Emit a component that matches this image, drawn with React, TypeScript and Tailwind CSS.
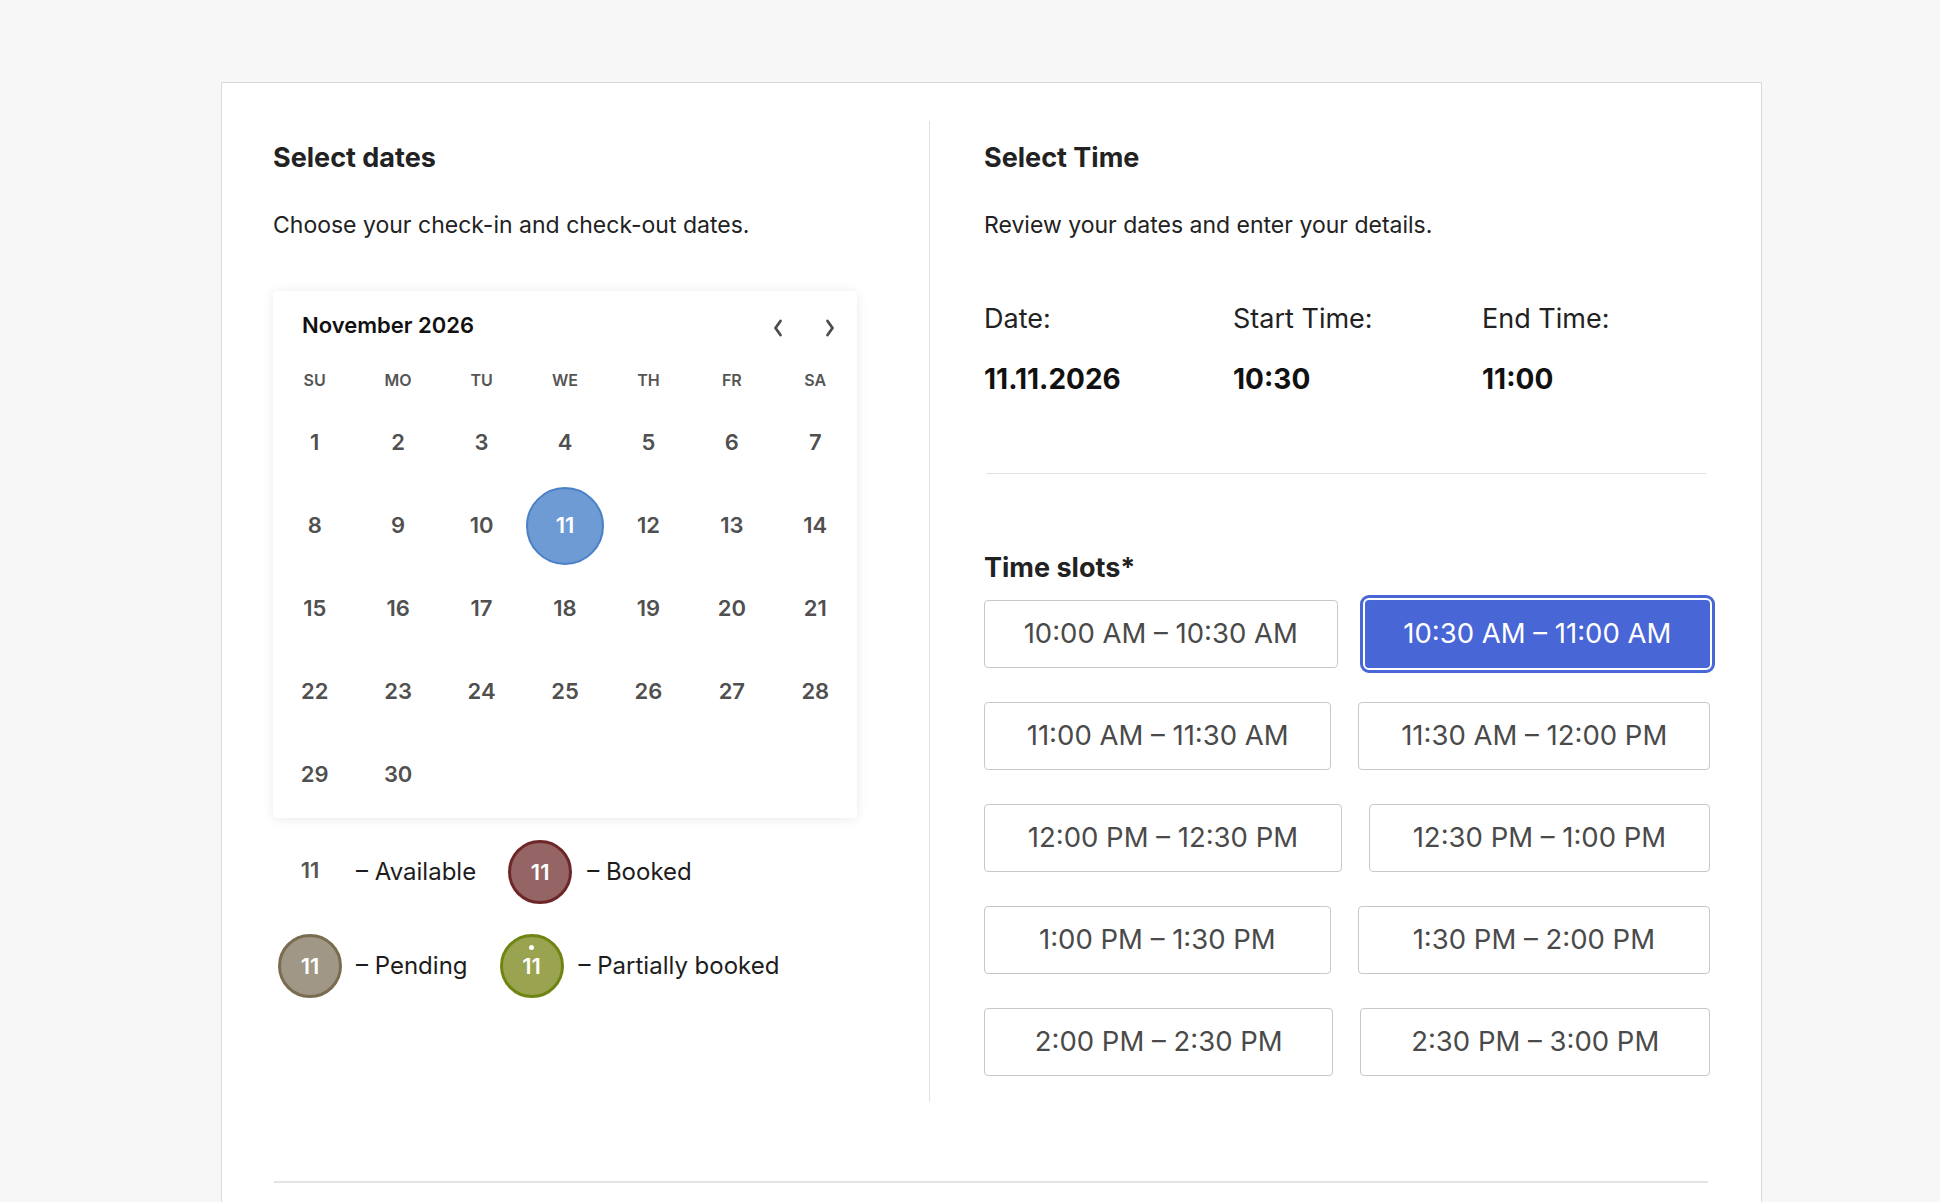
import React from "react";

const weekdays = ["SU", "MO", "TU", "WE", "TH", "FR", "SA"];
const days = Array.from({ length: 30 }, (_, i) => i + 1);

const slots = [
  "10:00 AM – 10:30 AM",
  "10:30 AM – 11:00 AM",
  "11:00 AM – 11:30 AM",
  "11:30 AM – 12:00 PM",
  "12:00 PM – 12:30 PM",
  "12:30 PM – 1:00 PM",
  "1:00 PM – 1:30 PM",
  "1:30 PM – 2:00 PM",
  "2:00 PM – 2:30 PM",
  "2:30 PM – 3:00 PM",
];

function Chevron({ dir }: { dir: "left" | "right" }) {
  return (
    <svg width="12" height="20" viewBox="0 0 12 20" fill="none" aria-hidden>
      <path
        d={dir === "left" ? "M8.5 3 3.5 10l5 7" : "M3.5 3 8.5 10l-5 7"}
        stroke="#4d4d4d"
        strokeWidth="2.8"
        strokeLinecap="round"
        strokeLinejoin="round"
      />
    </svg>
  );
}

function Calendar() {
  return (
    <div className="mt-[52px] w-[584px] rounded-[4px] bg-white shadow-[0_1px_12px_rgba(0,0,0,0.09)]">
      <div className="flex h-[68px] items-center pl-[29px] pr-[21px]">
        <span className="text-[22px] font-semibold text-[#111]">November 2026</span>
        <div className="ml-auto flex items-center gap-[40px] pt-[6px]">
          <button aria-label="Previous month"><Chevron dir="left" /></button>
          <button aria-label="Next month"><Chevron dir="right" /></button>
        </div>
      </div>
      <div className="grid h-[42px] grid-cols-7 items-center">
        {weekdays.map((d) => (
          <span key={d} className="text-center text-[16px] font-semibold text-[#555]">
            {d}
          </span>
        ))}
      </div>
      <div className="grid grid-cols-7 pb-[2px]">
        {days.map((d) => (
          <div key={d} className="flex h-[83px] items-center justify-center">
            {d === 11 ? (
              <span className="flex size-[78px] items-center justify-center rounded-full border-2 border-[#4a80c8] bg-[#6e9bd3] text-[22px] font-semibold text-white">
                {d}
              </span>
            ) : (
              <span className="text-[22px] font-semibold text-[#505050]">{d}</span>
            )}
          </div>
        ))}
      </div>
    </div>
  );
}

function Dot({ fill, border, partial }: { fill: string; border: string; partial?: boolean }) {
  return (
    <span className={`relative flex size-[64px] shrink-0 items-center justify-center rounded-full border-[3px] ${fill} ${border} text-[22px] font-semibold text-white`}>
      {partial && <span className="absolute top-[8px] size-[5px] rounded-full bg-white" />}
      11
    </span>
  );
}

function Legend() {
  return (
    <div className="mt-[22px] flex flex-col gap-[30px] pl-[5px] text-[24px] text-[#1d1d1d]">
      <div className="flex items-center">
        <span className="flex size-[64px] items-center justify-center pb-[3px] text-[22px] font-semibold text-[#555]">11</span>
        <span className="ml-[14px]">– Available</span>
        <span className="ml-[32px]">
          <Dot fill="bg-[#956565]" border="border-[#6d2727]" />
        </span>
        <span className="ml-[15px]">– Booked</span>
      </div>
      <div className="flex items-center">
        <Dot fill="bg-[#a09787]" border="border-[#7a6c50]" />
        <span className="ml-[14px]">– Pending</span>
        <span className="ml-[32px]">
          <Dot fill="bg-[#9aa34f]" border="border-[#6e8512]" partial />
        </span>
        <span className="ml-[15px]">– Partially booked</span>
      </div>
    </div>
  );
}

function SlotButton({ label, active }: { label: string; active: boolean }) {
  return active ? (
    <button className="flex h-[68px] grow items-center justify-center rounded-[4px] bg-[#4866d5] px-[20px] text-[27.5px] text-white outline-[3px] outline-offset-[2px] outline-[#4866d5] outline-solid">
      {label}
    </button>
  ) : (
    <button className="flex h-[68px] grow items-center justify-center rounded-[4px] border border-[#c8c8c8] bg-white px-[20px] text-[27.5px] text-[#4a4a4a]">
      {label}
    </button>
  );
}

export default function App() {
  const rows: string[][] = [];
  for (let i = 0; i < slots.length; i += 2) rows.push(slots.slice(i, i + 2));

  return (
    <div className="min-h-screen bg-[#f7f7f7] pt-[82px] font-['Inter','Noto_Sans',sans-serif] text-[#222]">
      <div className="ml-[221px] w-[1541px] border border-[#dadada] bg-white pt-[38px] pb-[80px]">
        <div className="flex pl-[51px] pr-[51px]">
          <section className="w-[657px] shrink-0 border-r border-[#e2e2e2] pt-[21px]">
            <h2 className="text-[27px] leading-[32px] font-bold text-[#222]">Select dates</h2>
            <p className="mt-[37px] text-[23px] leading-[28px] text-[#222]">
              Choose your check-in and check-out dates.
            </p>
            <Calendar />
            <Legend />
          </section>

          <section className="min-w-0 flex-1 pt-[21px] pb-[26px] pl-[54px]">
            <h2 className="text-[27px] leading-[32px] font-bold text-[#222]">Select Time</h2>
            <p className="mt-[37px] text-[23px] leading-[28px] text-[#222]">
              Review your dates and enter your details.
            </p>
            <div className="mt-[64px] flex">
              {[
                ["Date:", "11.11.2026"],
                ["Start Time:", "10:30"],
                ["End Time:", "11:00"],
              ].map(([k, v]) => (
                <div key={k} className="w-[249px] shrink-0 last:w-auto">
                  <div className="text-[27px] leading-[32px] text-[#222]">{k}</div>
                  <div className="mt-[27px] text-[28px] leading-[34px] font-bold text-[#111]">{v}</div>
                </div>
              ))}
            </div>
            <div className="mt-[77px] ml-[2px] h-px w-[720px] bg-[#e2e2e2]" />
            <h3 className="mt-[78px] text-[27px] leading-[32px] font-bold text-[#222]">Time slots*</h3>
            <div className="mt-[16px] flex flex-col gap-[34px]">
              {rows.map((r) => (
                <div key={r[0]} className="flex gap-[27px]">
                  {r.map((s) => (
                    <SlotButton key={s} label={s} active={s === "10:30 AM – 11:00 AM"} />
                  ))}
                </div>
              ))}
            </div>
          </section>
        </div>
        <div className="mx-[52px] mt-[79px] h-[2px] w-[1434px] bg-[#e4e4e4]" />
      </div>
    </div>
  );
}
